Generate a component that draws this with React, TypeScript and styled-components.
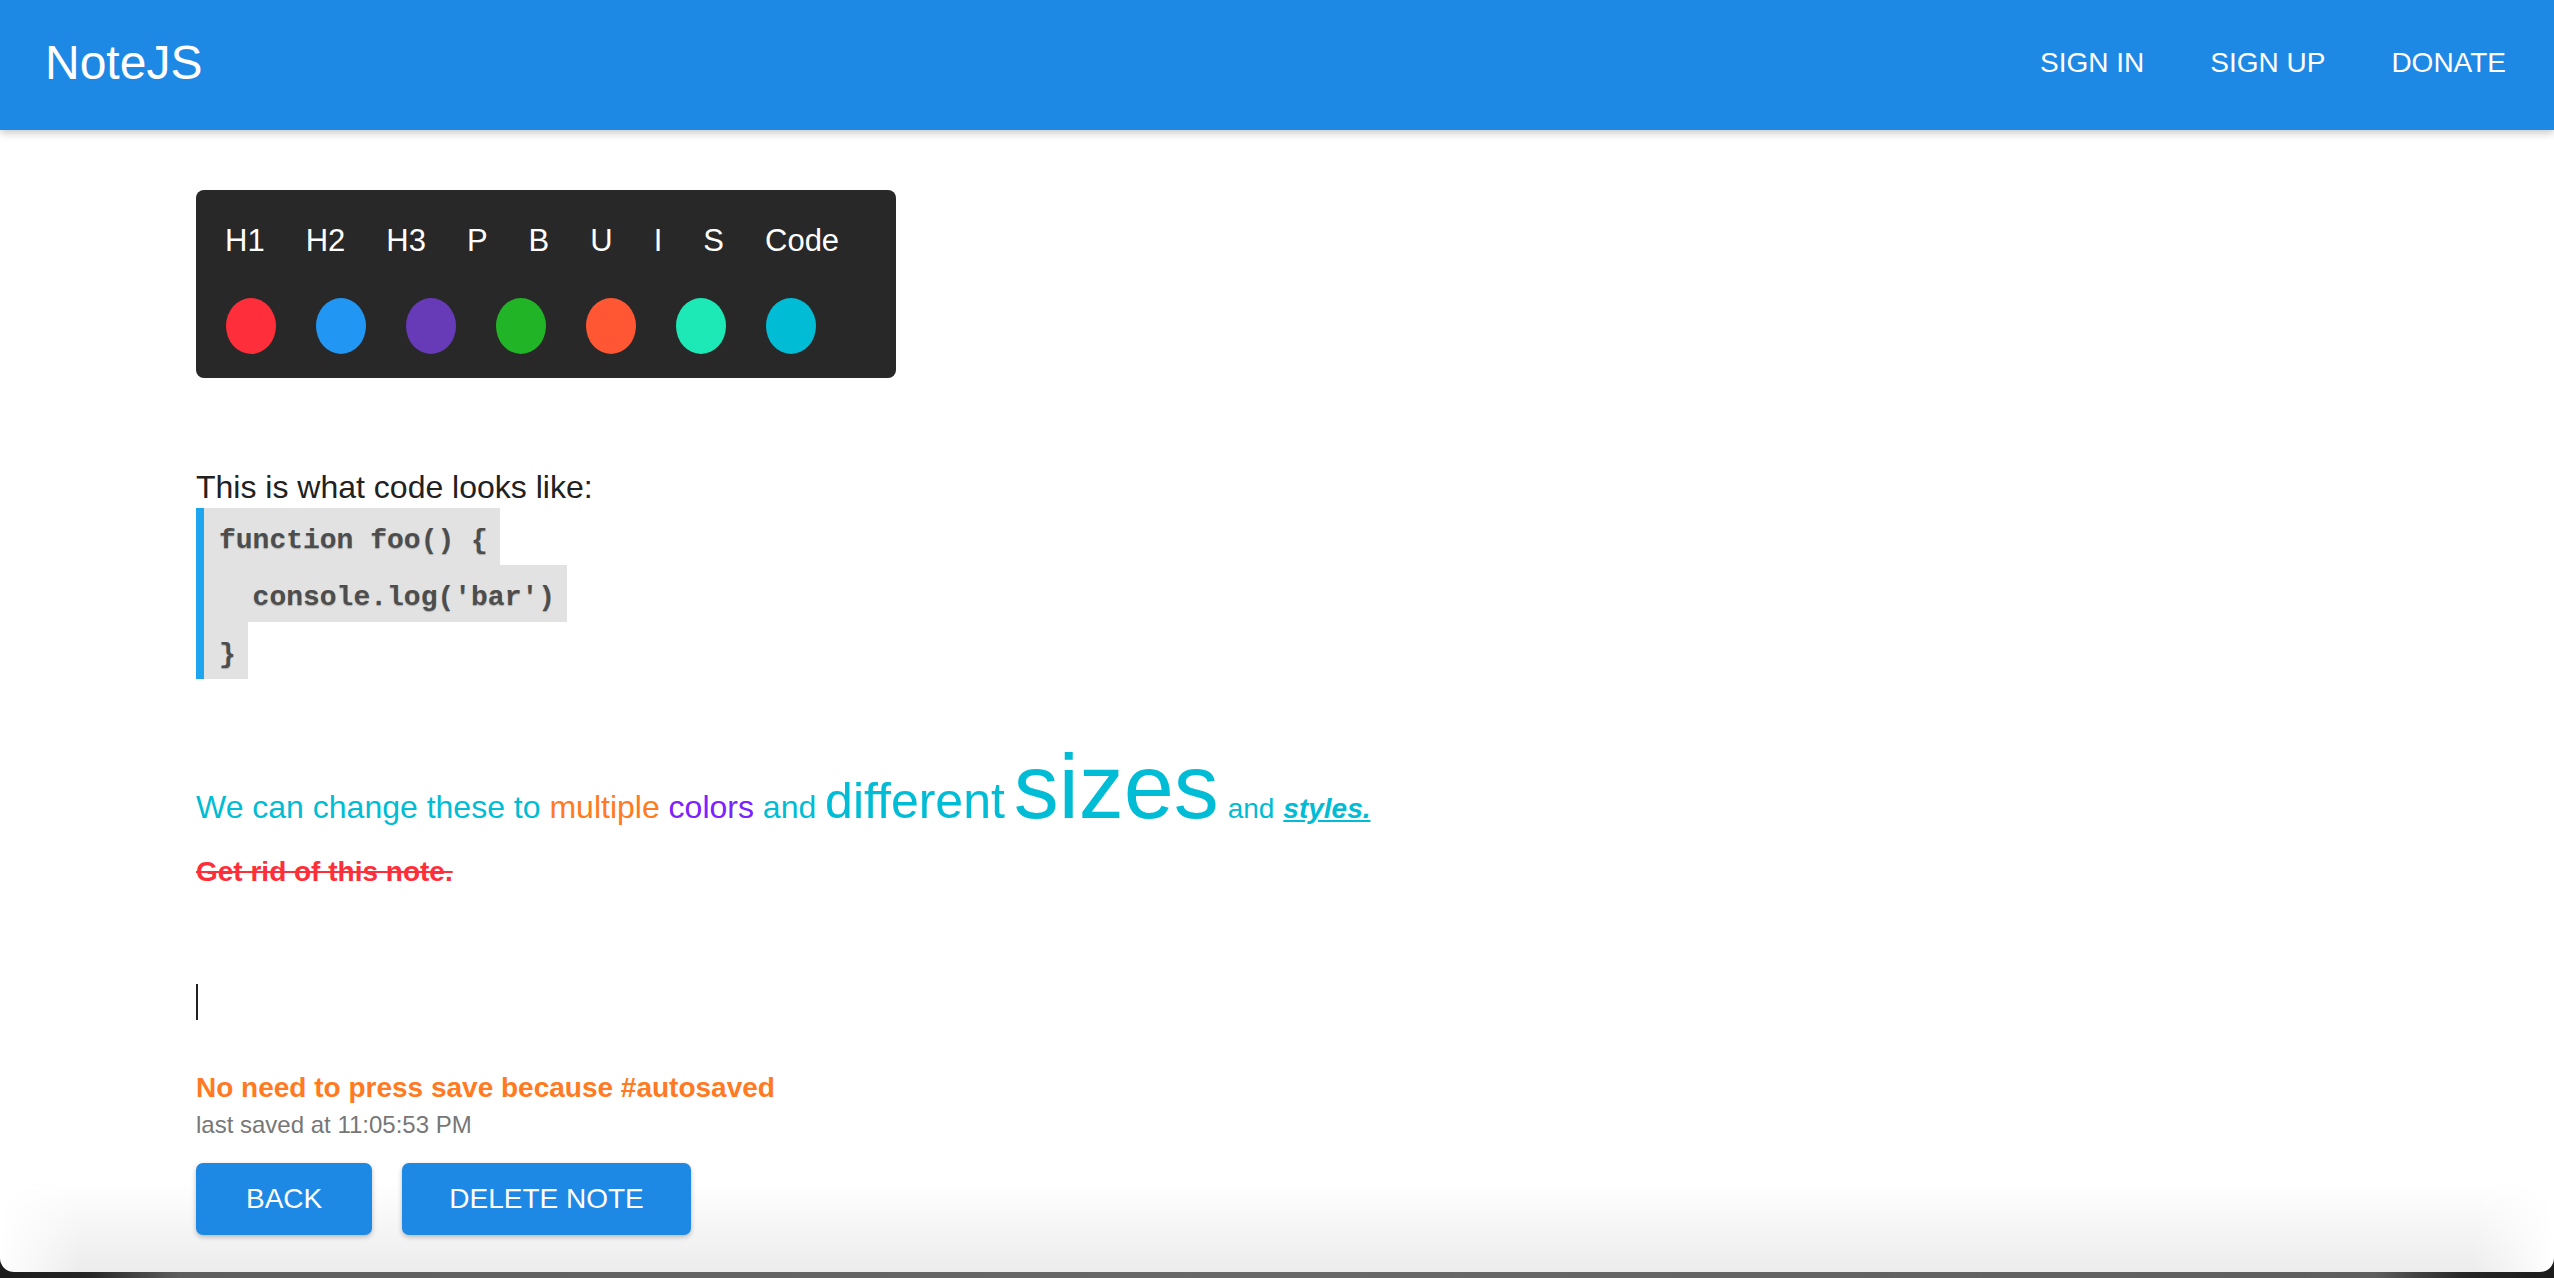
import React from 'react';
import styled, { createGlobalStyle } from 'styled-components';

const GlobalStyle = createGlobalStyle`
  html, body {
    margin: 0;
    padding: 0;
    height: 100%;
    overflow: hidden;
    background: linear-gradient(to right, #1c1c1c 0, #262626 90px, #5e5e5e 180px, #686868 50%, #5e5e5e calc(100% - 180px), #262626 calc(100% - 90px), #1c1c1c 100%);
  }
  body {
    font-family: "Liberation Sans", Arial, sans-serif;
  }
`;

const Window = styled.div`
  height: calc(100vh - 6px);
  display: flex;
  flex-direction: column;
  overflow: hidden;
  border-radius: 0 0 14px 14px;
  background-color: #fff;
  background-image:
    linear-gradient(to right, #fff 0, rgba(255, 255, 255, 0) 80px, rgba(255, 255, 255, 0) calc(100% - 80px), #fff 100%),
    linear-gradient(to bottom, rgba(0, 0, 0, 0) calc(100% - 90px), rgba(0, 0, 0, 0.075) 100%);
`;

const Header = styled.header`
  position: relative;
  z-index: 1;
  flex: 0 0 130px;
  display: flex;
  align-items: center;
  justify-content: space-between;
  padding: 0 15px 5px 45px;
  box-sizing: border-box;
  background: #1e88e5;
  box-shadow: 0 3px 8px rgba(0, 0, 0, 0.22);
  color: #fff;
`;

const Logo = styled.div`
  font-size: 48px;
  line-height: 1;
`;

const Nav = styled.nav`
  display: flex;
`;

const NavLink = styled.a`
  padding: 0 33px;
  font-size: 28px;
  line-height: 1;
  text-transform: uppercase;
  color: #fff;
  text-decoration: none;
`;

const Main = styled.main`
  flex: 1;
  padding: 60px 0 0 196px;
`;

const Toolbar = styled.div`
  width: 700px;
  height: 188px;
  box-sizing: border-box;
  padding-top: 31px;
  border-radius: 8px;
  background: #282828;
`;

const LabelRow = styled.div`
  display: flex;
  gap: 41px;
  padding-left: 29px;
  height: 40px;
  font-size: 31px;
  line-height: 40px;
  color: #fff;
`;

const Label = styled.span`
  cursor: pointer;
`;

const SwatchRow = styled.div`
  display: flex;
  gap: 40px;
  padding-left: 30px;
  margin-top: 37px;
`;

const Swatch = styled.span<{ $color: string }>`
  width: 50px;
  height: 56px;
  border-radius: 50%;
  background: ${p => p.$color};
  cursor: pointer;
`;

const Editor = styled.div`
  margin-top: 89px;
  color: #212121;
`;

const Intro = styled.div`
  font-size: 32px;
  line-height: 40px;
`;

const CodeBlock = styled.div`
  margin-top: 1px;
  border-left: 8px solid #1da5f0;
`;

const CodeLine = styled.div`
  width: fit-content;
  height: 57px;
  box-sizing: border-box;
  padding: 8px 12px 0 15px;
  background: #e2e2e2;
  font-family: "Liberation Mono", "Courier New", monospace;
  font-size: 28px;
  font-weight: bold;
  line-height: 49px;
  white-space: pre;
  color: #4d4d4d;
  text-shadow: 0 1px 1px rgba(0, 0, 0, 0.25);
`;

const Colorful = styled.p`
  margin: 57px 0 0;
  font-size: 32px;
  line-height: 1.15;
  color: #00bcd4;
`;

const Tint = styled.span<{ $color?: string; $size?: number }>`
  ${p => p.$color && `color: ${p.$color};`}
  ${p => p.$size && `font-size: ${p.$size}px;`}
`;

const Styled = styled.span`
  font-size: 28px;
  font-weight: bold;
  font-style: italic;
  text-decoration: underline;
`;

const Struck = styled.p`
  margin: 16px 0 0;
  font-size: 28px;
  font-weight: bold;
  line-height: 1.15;
  color: #ff2f3a;
  text-decoration: line-through;
`;

const Caret = styled.div`
  margin-top: 96px;
  width: 2px;
  height: 36px;
  background: #222;
`;

const Autosave = styled.div`
  margin-top: 52px;
  font-size: 28px;
  font-weight: bold;
  line-height: 1.15;
  color: #ff7a22;
`;

const SavedAt = styled.div`
  margin-top: 7px;
  font-size: 24px;
  line-height: 1.15;
  color: #777;
`;

const Actions = styled.div`
  display: flex;
  gap: 30px;
  margin-top: 25px;
`;

const Button = styled.button<{ $pad: number }>`
  height: 72px;
  padding: 0 ${p => p.$pad}px;
  border: none;
  border-radius: 7px;
  background: #1e88e5;
  box-shadow: 0 2px 5px rgba(0, 0, 0, 0.25);
  font-family: "Liberation Sans", Arial, sans-serif;
  font-size: 28px;
  text-transform: uppercase;
  color: #fff;
  cursor: pointer;
`;

const labels = ['H1', 'H2', 'H3', 'P', 'B', 'U', 'I', 'S', 'Code'];
const swatches = ['#fe2e3a', '#2196f3', '#673ab7', '#22b427', '#ff5733', '#1de9b6', '#00bcd4'];

const App: React.FC = () => {
  return (
    <>
      <GlobalStyle />
      <Window>
        <Header>
          <Logo>NoteJS</Logo>
          <Nav>
            <NavLink href="#">Sign in</NavLink>
            <NavLink href="#">Sign up</NavLink>
            <NavLink href="#">Donate</NavLink>
          </Nav>
        </Header>
        <Main>
          <Toolbar>
            <LabelRow>
              {labels.map(l => (
                <Label key={l}>{l}</Label>
              ))}
            </LabelRow>
            <SwatchRow>
              {swatches.map(c => (
                <Swatch key={c} $color={c} />
              ))}
            </SwatchRow>
          </Toolbar>
          <Editor>
            <Intro>This is what code looks like:</Intro>
            <CodeBlock>
              <CodeLine>function foo() {'{'}</CodeLine>
              <CodeLine>{"  console.log('bar')"}</CodeLine>
              <CodeLine>{'}'}</CodeLine>
            </CodeBlock>
            <Colorful>
              We can change these to <Tint $color="#ff7a22">multiple</Tint>{' '}
              <Tint $color="#7b22ff">colors</Tint> and <Tint $size={50}>different</Tint>{' '}
              <Tint $size={90}>sizes</Tint> <Tint $size={28}>and</Tint> <Styled>styles.</Styled>
            </Colorful>
            <Struck>Get rid of this note.</Struck>
            <Caret />
            <Autosave>No need to press save because #autosaved</Autosave>
            <SavedAt>last saved at 11:05:53 PM</SavedAt>
            <Actions>
              <Button $pad={50}>Back</Button>
              <Button $pad={47}>Delete note</Button>
            </Actions>
          </Editor>
        </Main>
      </Window>
    </>
  );
};

export default App;
